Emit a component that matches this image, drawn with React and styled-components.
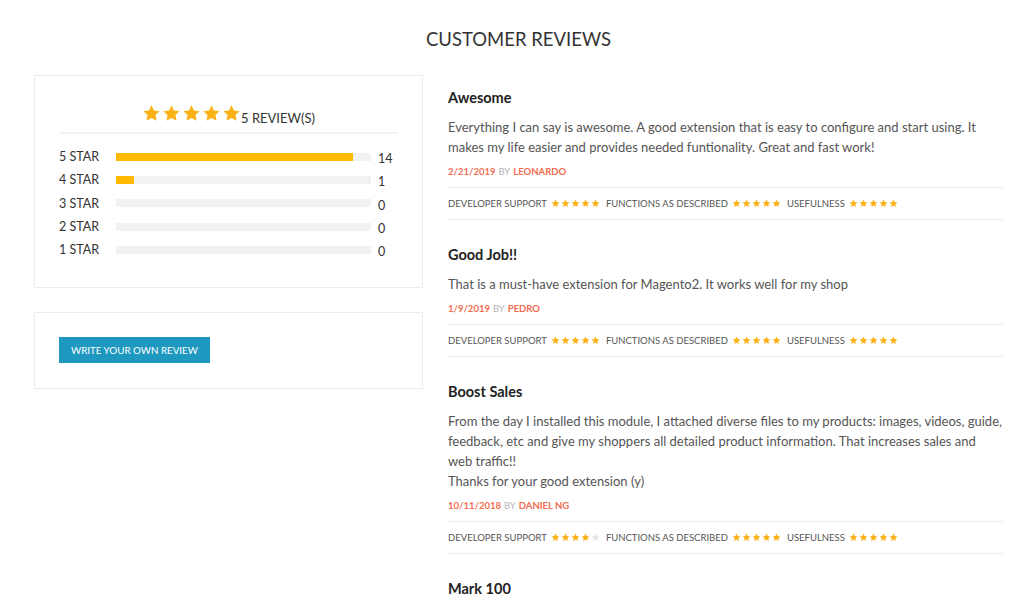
import styled, { createGlobalStyle } from 'styled-components'

const GlobalStyle = createGlobalStyle`
body {
  margin: 0;
  background: #fff;
  font-family: Lato, "Open Sans", sans-serif;
  color: #333;
}
`

const Page = styled.div`
width: 1024px;
height: 608px;
overflow: hidden;
padding: 0 21px 0 34px;
box-sizing: border-box;
`

const Title = styled.h2`
margin: 0;
padding-top: 27px;
height: 48px;
box-sizing: border-box;
text-align: center;
font-size: 18.5px;
font-weight: 400;
line-height: 24px;
color: #333;
`

const Columns = styled.div`
display: flex;
gap: 25px;
align-items: flex-start;
`

const LeftColumn = styled.div`
width: 389px;
display: flex;
flex-direction: column;
gap: 24px;
padding-top: 27px;
`

const Panel = styled.div`
border: 1px solid #ececec;
padding: ${props => props.$pad || '24px'};
`

const Summary = styled.div`
display: flex;
justify-content: center;
align-items: flex-end;
padding-bottom: 9px;
border-bottom: 2px solid #f3f3f3;
margin-bottom: 11px;
margin-top: 1px;
`

const SummaryText = styled.span`
font-size: 13px;
line-height: 16px;
color: #333;
margin-bottom: -3px;
`

const BarRow = styled.div`
display: flex;
align-items: center;
height: 23.3px;
`

const BarLabel = styled.span`
width: 57px;
font-size: 12.5px;
color: #333;
`

const BarTrack = styled.div`
width: 255px;
height: 8px;
background: #f2f2f2;
`

const BarFill = styled.div`
height: 100%;
background: #ffb900;
`

const BarCount = styled.span`
margin-left: 7px;
margin-top: 4px;
font-size: 12.5px;
color: #333;
`

const WriteButton = styled.button`
background: #1e98bf;
color: #fff;
border: none;
padding: 0 12px;
height: 26px;
font-family: inherit;
font-size: 9.8px;
font-weight: 400;
text-transform: uppercase;
cursor: pointer;
`

const RightColumn = styled.div`
width: 555px;
padding-top: 40px;
`

const Review = styled.div`
margin-bottom: 25px;
`

const ReviewTitle = styled.h3`
margin: 0 0 9px;
font-size: 14.5px;
font-weight: 700;
line-height: 20px;
color: #222;
`

const ReviewBody = styled.p`
margin: 0;
font-size: 13px;
line-height: 20px;
color: #555;
`

const Meta = styled.div`
margin-top: 7px;
font-size: 9.5px;
font-weight: 700;
line-height: 16px;
text-transform: uppercase;
color: #f26c4f;
`

const By = styled.span`
color: #b5b5b5;
font-weight: 400;
margin: 0 3px;
`

const Ratings = styled.div`
display: flex;
align-items: center;
margin-top: 7px;
height: 31px;
border-top: 1px solid #ececec;
border-bottom: 1px solid #ececec;
font-size: 9.5px;
color: #555;
text-transform: uppercase;
gap: 6px;
`

const RatingItem = styled.span`
display: inline-flex;
align-items: center;
gap: 4px;
`

const StarRow = styled.span`
display: inline-flex;
gap: ${props => props.$gap}px;
`

const Star = ({ size, filled = true }) => (
  <svg width={size} height={size} viewBox="0 0 24 24">
    <path
      d="M12 1.5l3.1 6.6 7.2.9-5.3 5 1.4 7.1L12 17.6l-6.4 3.5 1.4-7.1-5.3-5 7.2-.9z"
      fill={filled ? '#fbb217' : '#e3e3e3'}
    />
  </svg>
)

const Stars = ({ count = 5, size, gap }) => (
  <StarRow $gap={gap}>
    {[0, 1, 2, 3, 4].map(i => <Star key={i} size={size} filled={i < count} />)}
  </StarRow>
)

const bars = [
  { label: '5 STAR', count: 14, pct: 93 },
  { label: '4 STAR', count: 1, pct: 7 },
  { label: '3 STAR', count: 0, pct: 0 },
  { label: '2 STAR', count: 0, pct: 0 },
  { label: '1 STAR', count: 0, pct: 0 },
]

const reviews = [
  {
    title: 'Awesome',
    body: ['Everything I can say is awesome. A good extension that is easy to configure and start using. It makes my life easier and provides needed funtionality. Great and fast work!'],
    date: '2/21/2019',
    author: 'Leonardo',
    scores: [5, 5, 5],
  },
  {
    title: 'Good Job!!',
    body: ['That is a must-have extension for Magento2. It works well for my shop'],
    date: '1/9/2019',
    author: 'Pedro',
    scores: [5, 5, 5],
  },
  {
    title: 'Boost Sales',
    body: [
      'From the day I installed this module, I attached diverse files to my products: images, videos, guide, feedback, etc and give my shoppers all detailed product information. That increases sales and web traffic!!',
      'Thanks for your good extension (y)',
    ],
    date: '10/11/2018',
    author: 'Daniel Ng',
    scores: [4, 5, 5],
  },
  // the rest of this one is below the fold
  { title: 'Mark 100', body: [] },
]

const criteria = ['Developer Support', 'Functions as Described', 'Usefulness']

export default function App() {
  return (
    <Page>
      <GlobalStyle />
      <Title>CUSTOMER REVIEWS</Title>
      <Columns>
        <LeftColumn>
          <Panel $pad="27px 24px 26px">
            <Summary>
              <Stars size={19} gap={1} />
              <SummaryText>5 REVIEW(S)</SummaryText>
            </Summary>
            {bars.map(b => (
              <BarRow key={b.label}>
                <BarLabel>{b.label}</BarLabel>
                <BarTrack>
                  <BarFill style={{ width: `${b.pct}%` }} />
                </BarTrack>
                <BarCount>{b.count}</BarCount>
              </BarRow>
            ))}
          </Panel>
          <Panel $pad="24px 24px 25px">
            <WriteButton>Write your own review</WriteButton>
          </Panel>
        </LeftColumn>
        <RightColumn>
          {reviews.map(r => (
            <Review key={r.title}>
              <ReviewTitle>{r.title}</ReviewTitle>
              {r.body.map((p, i) => <ReviewBody key={i}>{p}</ReviewBody>)}
              {r.date && (
                <Meta>
                  {r.date}<By>by</By>{r.author}
                </Meta>
              )}
              {r.scores && (
                <Ratings>
                  {criteria.map((c, i) => (
                    <RatingItem key={c}>
                      {c}
                      <Stars count={r.scores[i]} size={9} gap={1} />
                    </RatingItem>
                  ))}
                </Ratings>
              )}
            </Review>
          ))}
        </RightColumn>
      </Columns>
    </Page>
  )
}
